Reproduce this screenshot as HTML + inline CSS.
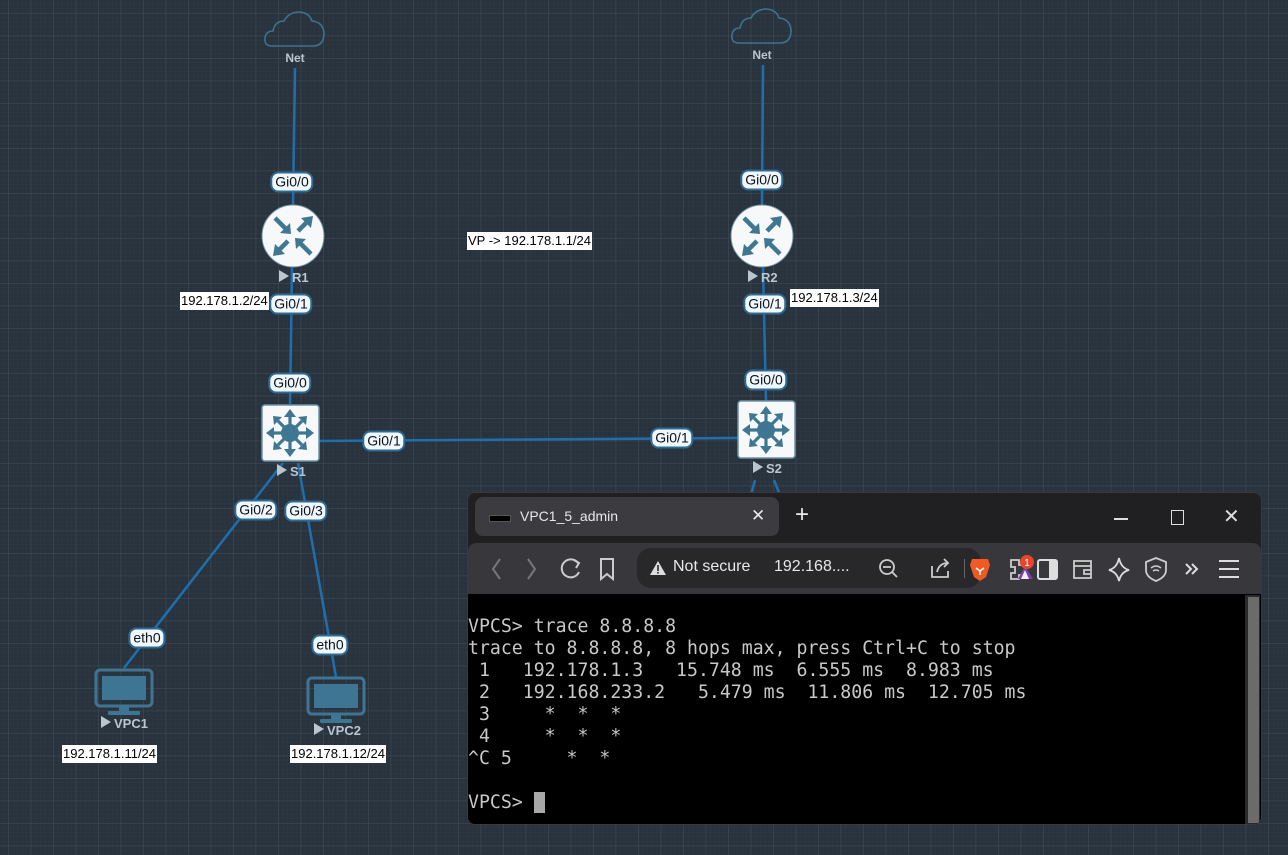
<!DOCTYPE html>
<html><head><meta charset="utf-8">
<style>
html,body{margin:0;padding:0;width:1288px;height:855px;overflow:hidden;background:#29333d;font-family:"Liberation Sans",sans-serif}
#bg{position:absolute;left:0;top:0}
.lbl{position:absolute;background:#f0f8ff;border:2px solid #2f6a93;border-radius:8px;font-size:14px;color:#111;height:17px;line-height:17px;padding:0 3px;transform:translate(-50%,-50%);white-space:nowrap}
.ip{position:absolute;background:#fff;color:#000;font-size:13px;height:18px;line-height:18px;padding:0 1px;white-space:nowrap}
.win{position:absolute;left:467px;top:492px;width:795px;height:333px;background:#202023;border-radius:8px;overflow:hidden;border:1px solid #3a3a3e;box-sizing:border-box}
.tab{position:absolute;left:7px;top:4px;width:304px;height:39px;background:#3c3c40;border-radius:8px;color:#e8e8e8;font-size:14px}
.tb{position:absolute;left:0;top:50px;width:100%;height:51px;background:#38383c;border-radius:8px 8px 0 0}
.addr{position:absolute;left:169px;top:5px;width:344px;height:40px;background:#28282b;border-radius:14px;color:#e8e8e8;font-size:16px}
.term{position:absolute;left:0;top:101px;width:100%;height:232px;background:#000}
pre{margin:0;position:absolute;left:0;top:22px;font-family:"DejaVu Sans Mono","Liberation Mono",monospace;font-size:18.2px;line-height:22px;color:#c8c8c8}
.ic{position:absolute}
</style></head><body>
<svg id="bg" width="1288" height="855">
<defs>
<pattern id="mn" width="4.5" height="4.5" patternUnits="userSpaceOnUse"><path d="M4.5 0V4.5H0" fill="none" stroke="#2e3842" stroke-width="1"/></pattern>
<pattern id="mj" width="22.5" height="22.5" patternUnits="userSpaceOnUse" x="8" y="13"><path d="M0 0V22.5M0 0H22.5" fill="none" stroke="#3b4651" stroke-width="1.5"/></pattern>
</defs>
<rect width="1288" height="855" fill="#29333d"/>
<rect width="1288" height="855" fill="url(#mn)"/>
<rect width="1288" height="855" fill="url(#mj)"/>
<g stroke="#1f6fae" stroke-width="2.5" fill="none">
<line x1="295" y1="68" x2="293" y2="205"/>
<line x1="292" y1="268" x2="290" y2="404"/>
<line x1="319" y1="441" x2="738" y2="438"/>
<line x1="763" y1="65" x2="762" y2="205"/>
<line x1="763" y1="268" x2="766" y2="401"/>
<line x1="283" y1="463" x2="124" y2="668"/>
<line x1="298" y1="463" x2="336" y2="677"/>
<line x1="755" y1="480" x2="751" y2="495"/>
<line x1="774" y1="480" x2="780" y2="495"/>
</g>
<g fill="none" stroke="#3d7391" stroke-width="1.6">
<path d="M272 46 Q264 46 265 38 Q266 31 273 31 Q275 21 284 21 Q288 13 298 12 Q309 12 312 21 Q323 22 324 33 Q324 46 313 46 Z"/>
<path d="M739 43 Q731 43 732 35 Q733 28 740 28 Q742 18 751 18 Q755 10 765 9 Q776 9 779 18 Q790 19 791 30 Q791 43 780 43 Z"/>
</g>
<g font-family="Liberation Sans" font-weight="bold" font-size="12" fill="#b9c6d0" text-anchor="middle">
<text x="295" y="62">Net</text><text x="762" y="59">Net</text>
</g>
<circle cx="293" cy="236" r="31" fill="#f7f8f9" stroke="#6f93a8" stroke-width="1"/>
<circle cx="762" cy="236" r="31" fill="#f7f8f9" stroke="#6f93a8" stroke-width="1"/>
<g stroke="#3f7692" stroke-width="4.5" fill="#3f7692">
<g transform="translate(293,236)">
<line x1="-18" y1="-18" x2="-6" y2="-6"/><path d="M-2 -2 L-13 -3 L-3 -13Z" stroke="none"/>
<line x1="5" y1="-5" x2="15" y2="-15"/><path d="M20 -20 L8 -18 L18 -8Z" stroke="none"/>
<line x1="-5" y1="5" x2="-15" y2="15"/><path d="M-20 20 L-8 18 L-18 8Z" stroke="none"/>
<line x1="18" y1="18" x2="6" y2="6"/><path d="M2 2 L13 3 L3 13Z" stroke="none"/>
</g>
<g transform="translate(762,236)">
<line x1="-18" y1="-18" x2="-6" y2="-6"/><path d="M-2 -2 L-13 -3 L-3 -13Z" stroke="none"/>
<line x1="5" y1="-5" x2="15" y2="-15"/><path d="M20 -20 L8 -18 L18 -8Z" stroke="none"/>
<line x1="-5" y1="5" x2="-15" y2="15"/><path d="M-20 20 L-8 18 L-18 8Z" stroke="none"/>
<line x1="18" y1="18" x2="6" y2="6"/><path d="M2 2 L13 3 L3 13Z" stroke="none"/>
</g>
</g>
<rect x="262" y="405" width="57" height="56" rx="3" fill="#f7f8f9" stroke="#6f93a8" stroke-width="1.5"/>
<rect x="738" y="401" width="57" height="57" rx="3" fill="#f7f8f9" stroke="#6f93a8" stroke-width="1.5"/>
<g fill="#3f7692" stroke="#3f7692">
<g transform="translate(290,433)">
<circle r="9" stroke="none"/>
<g stroke-width="3.2"><line x1="0" y1="0" x2="0" y2="-18"/><line x1="0" y1="0" x2="0" y2="18"/><line x1="0" y1="0" x2="-18" y2="0"/><line x1="0" y1="0" x2="18" y2="0"/><line x1="0" y1="0" x2="-12" y2="-12"/><line x1="0" y1="0" x2="12" y2="-12"/><line x1="0" y1="0" x2="-12" y2="12"/><line x1="0" y1="0" x2="12" y2="12"/></g>
<g stroke="none"><path d="M0 -24 L-6 -16 L6 -16Z"/><path d="M0 24 L-6 16 L6 16Z"/><path d="M-24 0 L-16 -6 L-16 6Z"/><path d="M24 0 L16 -6 L16 6Z"/><path d="M-17 -17 L-16 -8 L-8 -16Z"/><path d="M17 -17 L16 -8 L8 -16Z"/><path d="M-17 17 L-16 8 L-8 16Z"/><path d="M17 17 L16 8 L8 16Z"/></g>
</g>
<g transform="translate(766,430)">
<circle r="9" stroke="none"/>
<g stroke-width="3.2"><line x1="0" y1="0" x2="0" y2="-18"/><line x1="0" y1="0" x2="0" y2="18"/><line x1="0" y1="0" x2="-18" y2="0"/><line x1="0" y1="0" x2="18" y2="0"/><line x1="0" y1="0" x2="-12" y2="-12"/><line x1="0" y1="0" x2="12" y2="-12"/><line x1="0" y1="0" x2="-12" y2="12"/><line x1="0" y1="0" x2="12" y2="12"/></g>
<g stroke="none"><path d="M0 -24 L-6 -16 L6 -16Z"/><path d="M0 24 L-6 16 L6 16Z"/><path d="M-24 0 L-16 -6 L-16 6Z"/><path d="M24 0 L16 -6 L16 6Z"/><path d="M-17 -17 L-16 -8 L-8 -16Z"/><path d="M17 -17 L16 -8 L8 -16Z"/><path d="M-17 17 L-16 8 L-8 16Z"/><path d="M17 17 L16 8 L8 16Z"/></g>
</g>
</g>
<g fill="#3e7593">
<rect x="96" y="670" width="56" height="36" rx="4" fill="none" stroke="#3e7593" stroke-width="3"/>
<rect x="102" y="676" width="44" height="24"/>
<rect x="119" y="706" width="10" height="6"/><rect x="108" y="711" width="32" height="4" rx="1"/>
<rect x="308" y="678" width="56" height="36" rx="4" fill="none" stroke="#3e7593" stroke-width="3"/>
<rect x="314" y="684" width="44" height="24"/>
<rect x="331" y="714" width="10" height="6"/><rect x="320" y="719" width="32" height="4" rx="1"/>
</g>
<g fill="#b9c6d0"><path d="M279 270 L289 276 L279 282Z"/><path d="M748 270 L758 276 L748 282Z"/>
<path d="M277 464 L287 470 L277 476Z"/><path d="M753 461 L763 467 L753 473Z"/>
<path d="M101 716 L111 722 L101 728Z"/><path d="M314 723 L324 729 L314 735Z"/></g>
<g font-family="Liberation Sans" font-weight="bold" font-size="13" fill="#b9c6d0">
<text x="292" y="282">R1</text><text x="761" y="282">R2</text>
<text x="290" y="476">S1</text><text x="766" y="473">S2</text>
<text x="114" y="728">VPC1</text><text x="327" y="735">VPC2</text>
</g>
</svg>

<div class="lbl" style="left:292px;top:182px">Gi0/0</div>
<div class="lbl" style="left:291px;top:304px">Gi0/1</div>
<div class="lbl" style="left:290px;top:383px">Gi0/0</div>
<div class="lbl" style="left:384px;top:441px">Gi0/1</div>
<div class="lbl" style="left:672px;top:438px">Gi0/1</div>
<div class="lbl" style="left:762px;top:180px">Gi0/0</div>
<div class="lbl" style="left:765px;top:304px">Gi0/1</div>
<div class="lbl" style="left:766px;top:380px">Gi0/0</div>
<div class="lbl" style="left:256px;top:510px">Gi0/2</div>
<div class="lbl" style="left:306px;top:511px">Gi0/3</div>
<div class="lbl" style="left:147px;top:638px">eth0</div>
<div class="lbl" style="left:330px;top:645px">eth0</div>

<div class="ip" style="left:180px;top:292px">192.178.1.2/24</div>
<div class="ip" style="left:790px;top:289px">192.178.1.3/24</div>
<div class="ip" style="left:467px;top:232px">VP -&gt; 192.178.1.1/24</div>
<div class="ip" style="left:62px;top:745px">192.178.1.11/24</div>
<div class="ip" style="left:290px;top:745px">192.178.1.12/24</div>

<div class="win">
 <div class="tab">
  <div style="position:absolute;left:14px;top:18px;width:20px;height:5px;background:#000;border:1px solid #555"></div>
  <div style="position:absolute;left:45px;top:11px">VPC1_5_admin</div>
  <div style="position:absolute;left:276px;top:9px;font-size:17px">✕</div>
 </div>
 <div style="position:absolute;left:327px;top:8px;color:#e8e8e8;font-size:24px;font-weight:300">+</div>
 <div style="position:absolute;left:646px;top:25px;width:14px;height:1.5px;background:#ddd"></div>
 <div style="position:absolute;left:703px;top:17px;width:11px;height:13px;border:1.5px solid #ddd"></div>
 <div style="position:absolute;left:755px;top:11px;color:#ddd;font-size:20px">✕</div>
 <div class="tb">
  <svg class="ic" style="left:0;top:0" width="170" height="51" fill="none" stroke="#ccc" stroke-width="2">
   <path d="M32 16 L25 26 L32 36" stroke="#777"/><path d="M60 16 L67 26 L60 36" stroke="#777"/>
   <path d="M110 20 A9 9 0 1 0 111 29"/><path d="M106 17 L111 20 L108 25"/>
   <path d="M133 16 H145 V36 L139 31 L133 36Z"/>
  </svg>
  <div class="addr">
   <svg class="ic" style="left:12px;top:12px" width="18" height="16"><path d="M9 1 L17 15 H1Z" fill="#ddd"/><rect x="8.2" y="5" width="1.6" height="6" fill="#28282b"/><rect x="8.2" y="12" width="1.6" height="1.6" fill="#28282b"/></svg>
   <div style="position:absolute;left:36px;top:10px">Not secure</div>
   <div style="position:absolute;left:137px;top:10px">192.168....</div>
   <svg class="ic" style="left:240px;top:8px" width="80" height="26" fill="none" stroke="#ccc" stroke-width="1.8"><circle cx="10" cy="11" r="7"/><path d="M6 11H14M15 16L20 21"/><path d="M55 10 L55 21 H71 V15"/><path d="M60 16 Q62 7 71 7 M67 3 L71 7 L67 11"/></svg>
   <div style="position:absolute;left:327px;top:11px;width:1px;height:19px;background:#666"></div>
  </div>
  <svg class="ic" style="left:495px;top:0" width="300" height="51">
   <path d="M9 16 H25 L27 22 L23 34 L17 38 L11 34 L7 22Z" fill="#f05a24"/>
   <path d="M13 25 L17 28 L21 25 M17 28 V32" stroke="#fff" stroke-width="1.5" fill="none"/>
   <path d="M48 17 H56 V22 H62 V32 H56 V36 H48 V30 H52 V24 H48Z" fill="none" stroke="#ccc" stroke-width="1.8"/>
   <path d="M55 36 L62 23 L70 36Z" fill="#7a3fa8"/><path d="M58 36 L62 27 L66 36Z" fill="#eee"/>
   <circle cx="64" cy="19" r="7" fill="#e8452c"/><text x="64" y="23" font-size="10" fill="#fff" text-anchor="middle" font-family="Liberation Sans">1</text>
   <rect x="75" y="17" width="19" height="19" rx="2" fill="none" stroke="#ddd" stroke-width="2"/><rect x="86" y="17" width="8" height="19" fill="#ddd"/>
   <path d="M111 18 H128 V35 H111Z M111 23 H128 M121 27 H128 V31 H121Z" fill="none" stroke="#ccc" stroke-width="1.8"/>
   <path d="M156 15 Q158 25 166 27 Q158 29 156 38 Q154 29 146 27 Q154 25 156 15Z" fill="none" stroke="#ddd" stroke-width="1.8"/>
   <path d="M193 15 L203 19 V27 Q203 34 193 38 Q183 34 183 27 V19Z" fill="none" stroke="#ccc" stroke-width="1.8"/>
   <path d="M188 25 Q193 21 198 25 M190 28 Q193 26 196 28" fill="none" stroke="#ccc" stroke-width="1.5"/>
   <path d="M223 21 L228 26 L223 31 M229 21 L234 26 L229 31" fill="none" stroke="#ddd" stroke-width="2"/>
   <path d="M256 18 H276 M256 26 H276 M256 34 H276" stroke="#ddd" stroke-width="2"/>
  </svg>
 </div>
 <div class="term">
<pre>VPCS&gt; trace 8.8.8.8
trace to 8.8.8.8, 8 hops max, press Ctrl+C to stop
 1   192.178.1.3   15.748 ms  6.555 ms  8.983 ms
 2   192.168.233.2   5.479 ms  11.806 ms  12.705 ms
 3     *  *  *
 4     *  *  *
^C 5     *  *

VPCS&gt; </pre>
  <div style="position:absolute;left:66px;top:198px;width:11px;height:21px;background:#a8a8a8"></div>
  <div style="position:absolute;left:777px;top:1px;width:15px;height:230px;background:#2a2a2a"></div>
  <div style="position:absolute;left:780px;top:3px;width:11px;height:226px;background:#6b6b6b"></div>
 </div>
</div>
</body></html>
